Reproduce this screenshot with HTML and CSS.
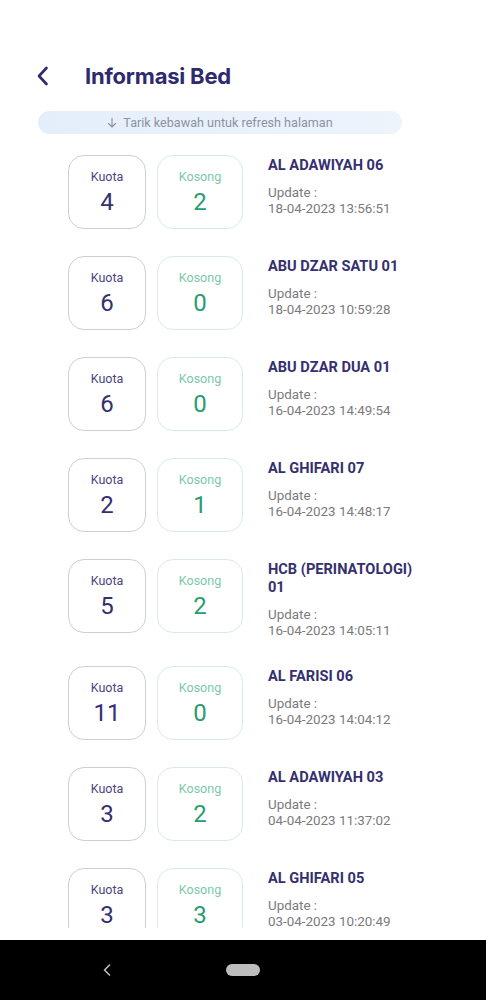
FILE: index.html
```html
<!DOCTYPE html>
<html lang="id">
<head>
<meta charset="utf-8">
<title>Informasi Bed</title>
<link rel="stylesheet" href="styles.css">
</head>
<body>
<div class="screen">
  <div class="content">
    <header class="header">
      <svg class="back" width="14" height="20" viewBox="0 0 14 20" aria-hidden="true"><path d="M10.5 2 L3 10 L10.5 18" fill="none" stroke="#2e2a6e" stroke-width="2.6" stroke-linecap="round" stroke-linejoin="round"/></svg>
      <h1 class="title">Informasi Bed</h1>
    </header>
    <div class="banner">
      <svg class="arrow" width="10" height="11" viewBox="0 0 10 11" aria-hidden="true"><path d="M5 1 V10 M1.5 6.5 L5 10 L8.5 6.5" fill="none" stroke="#8d93a4" stroke-width="1.1" stroke-linecap="round" stroke-linejoin="round"/></svg>
      <span>Tarik kebawah untuk refresh halaman</span>
    </div>
    <div class="list">
      <div class="row">
        <div class="box quota"><span class="lbl">Kuota</span><span class="num">4</span></div>
        <div class="box empty"><span class="lbl">Kosong</span><span class="num">2</span></div>
        <div class="info"><div class="name">AL ADAWIYAH 06</div><div class="upd">Update :<br>18-04-2023 13:56:51</div></div>
      </div>
      <div class="row">
        <div class="box quota"><span class="lbl">Kuota</span><span class="num">6</span></div>
        <div class="box empty"><span class="lbl">Kosong</span><span class="num">0</span></div>
        <div class="info"><div class="name">ABU DZAR SATU 01</div><div class="upd">Update :<br>18-04-2023 10:59:28</div></div>
      </div>
      <div class="row">
        <div class="box quota"><span class="lbl">Kuota</span><span class="num">6</span></div>
        <div class="box empty"><span class="lbl">Kosong</span><span class="num">0</span></div>
        <div class="info"><div class="name">ABU DZAR DUA 01</div><div class="upd">Update :<br>16-04-2023 14:49:54</div></div>
      </div>
      <div class="row">
        <div class="box quota"><span class="lbl">Kuota</span><span class="num">2</span></div>
        <div class="box empty"><span class="lbl">Kosong</span><span class="num">1</span></div>
        <div class="info"><div class="name">AL GHIFARI 07</div><div class="upd">Update :<br>16-04-2023 14:48:17</div></div>
      </div>
      <div class="row">
        <div class="box quota"><span class="lbl">Kuota</span><span class="num">5</span></div>
        <div class="box empty"><span class="lbl">Kosong</span><span class="num">2</span></div>
        <div class="info"><div class="name">HCB (PERINATOLOGI)<br>01</div><div class="upd">Update :<br>16-04-2023 14:05:11</div></div>
      </div>
      <div class="row">
        <div class="box quota"><span class="lbl">Kuota</span><span class="num">11</span></div>
        <div class="box empty"><span class="lbl">Kosong</span><span class="num">0</span></div>
        <div class="info"><div class="name">AL FARISI 06</div><div class="upd">Update :<br>16-04-2023 14:04:12</div></div>
      </div>
      <div class="row">
        <div class="box quota"><span class="lbl">Kuota</span><span class="num">3</span></div>
        <div class="box empty"><span class="lbl">Kosong</span><span class="num">2</span></div>
        <div class="info"><div class="name">AL ADAWIYAH 03</div><div class="upd">Update :<br>04-04-2023 11:37:02</div></div>
      </div>
      <div class="row">
        <div class="box quota"><span class="lbl">Kuota</span><span class="num">3</span></div>
        <div class="box empty"><span class="lbl">Kosong</span><span class="num">3</span></div>
        <div class="info"><div class="name">AL GHIFARI 05</div><div class="upd">Update :<br>03-04-2023 10:20:49</div></div>
      </div>
    </div>
  </div>
  <nav class="navbar">
    <svg class="nav-back" width="8" height="12" viewBox="0 0 8 12" aria-hidden="true"><path d="M6.5 1 L1.5 6 L6.5 11" fill="none" stroke="#bdbdbd" stroke-width="1.6" stroke-linecap="round" stroke-linejoin="round"/></svg>
    <span class="nav-home"></span>
  </nav>
</div>
</body>
</html>
```

FILE: styles.css
```css
* { box-sizing: border-box; }
html, body { margin: 0; padding: 0; background: #fff; }
body { font-family: Roboto, "Noto Sans", Arial, sans-serif; }

.screen {
  width: 486px;
  height: 1000px;
  display: flex;
  flex-direction: column;
  background: #fff;
}
.content {
  flex: 1;
  padding-bottom: 12px;
  display: flex;
  flex-direction: column;
  overflow: hidden;
}

.header {
  display: flex;
  align-items: center;
  height: 30px;
  margin-top: 61px;
  padding-left: 36px;
}
.back { display: block; }
.title {
  margin: 0 0 0 35px;
  font-family: Inter, Roboto, sans-serif;
  font-weight: 700;
  font-size: 22px;
  letter-spacing: -0.2px;
  color: #2e2a6e;
}

.banner {
  margin: 20px 0 0 38px;
  width: 364px;
  height: 23px;
  border-radius: 12px;
  background: linear-gradient(90deg, #e4eefa 0%, #edf4fc 100%);
  color: #8d93a4;
  font-size: 12.6px;
  display: flex;
  align-items: center;
  justify-content: center;
  gap: 6px;
}
.arrow { display: block; }

.list {
  margin-top: 21px;
  padding-left: 68px;
  flex: 1;
  overflow: hidden;
}
.row {
  display: flex;
  align-items: flex-start;
  padding-bottom: 27px;
}
.box {
  height: 74px;
  border-radius: 16px;
  border: 1px solid #cfced8;
  display: flex;
  flex-direction: column;
  align-items: center;
  flex-shrink: 0;
}
.box.quota { width: 78px; }
.box.empty { width: 86px; margin-left: 11px; border-color: #d8ece4; }
.lbl {
  margin-top: 14px;
  font-size: 12.5px;
  line-height: 14px;
  color: #4a4680;
}
.num {
  margin-top: 4px;
  font-size: 24px;
  line-height: 28px;
  color: #34306f;
}
.empty .lbl { color: #7ac8a8; }
.empty .num { color: #2a9c6f; }

.info {
  margin-left: 25px;
  padding-top: 1px;
}
.name {
  font-weight: 700;
  font-size: 14.6px;
  line-height: 18px;
  color: #34306f;
}
.upd {
  margin-top: 11px;
  font-size: 13.4px;
  line-height: 16px;
  color: #7a7a7e;
}

.navbar {
  height: 60px;
  background: #000;
  display: flex;
  align-items: center;
}
.nav-back {
  display: block;
  margin-left: 103px;
}
.nav-home {
  margin-left: 115px;
  width: 34px;
  height: 12px;
  border-radius: 6px;
  background: #bdbdbd;
}
```
